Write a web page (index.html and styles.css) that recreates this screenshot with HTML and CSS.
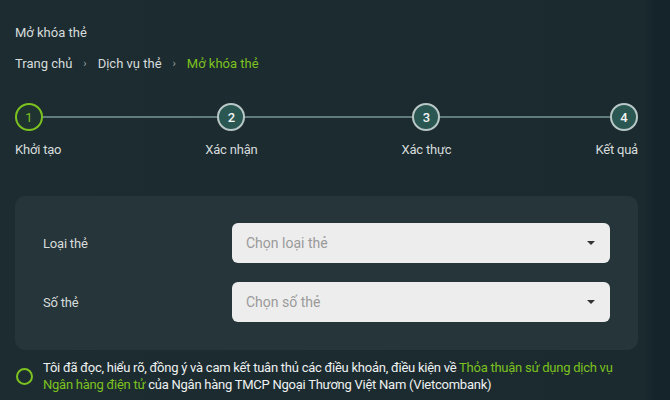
FILE: index.html
```html
<!DOCTYPE html>
<html lang="vi">
<head>
<meta charset="utf-8">
<link rel="stylesheet" href="styles.css">
</head>
<body>
<main class="page">
  <h1 class="title">Mở khóa thẻ</h1>
  <nav class="crumbs">
    <span>Trang chủ</span><span class="sep">›</span><span>Dịch vụ thẻ</span><span class="sep">›</span><span class="current">Mở khóa thẻ</span>
  </nav>
  <div class="stepper">
    <div class="line"></div>
    <div class="step step-start active"><span class="dot">1</span><span class="label">Khởi tạo</span></div>
    <div class="step"><span class="dot">2</span><span class="label">Xác nhận</span></div>
    <div class="step"><span class="dot">3</span><span class="label">Xác thực</span></div>
    <div class="step step-end"><span class="dot">4</span><span class="label">Kết quả</span></div>
  </div>
  <section class="card">
    <div class="row">
      <span class="field-label">Loại thẻ</span>
      <div class="select"><span>Chọn loại thẻ</span><i class="caret"></i></div>
    </div>
    <div class="row">
      <span class="field-label">Số thẻ</span>
      <div class="select"><span>Chọn số thẻ</span><i class="caret"></i></div>
    </div>
  </section>
  <div class="agree">
    <span class="check"></span>
    <p>Tôi đã đọc, hiểu rõ, đồng ý và cam kết tuân thủ các điều khoản, điều kiện về <span class="link">Thỏa thuận sử dụng dịch vụ Ngân hàng điện tử</span> của Ngân hàng TMCP Ngoại Thương Việt Nam (Vietcombank)</p>
  </div>
</main>
</body>
</html>
```

FILE: styles.css
```css
* { box-sizing: border-box; }
html, body { margin: 0; height: 100%; }
body {
  background: linear-gradient(90deg, #1d2c30 0%, #1b2a2e 96%, #15242a 97.8%, #15242a 100%);
  font-family: Roboto, "Noto Sans", sans-serif;
  color: #d9dfdf;
  overflow: hidden;
}
.page {
  width: 623px;
  margin-left: 15px;
  padding-top: 25px;
}
.title {
  margin: 0;
  font-size: 13px;
  font-weight: 400;
  line-height: 16px;
  color: #d6dcdc;
}
.crumbs {
  margin-top: 15px;
  font-size: 13px;
  line-height: 16px;
  display: flex;
  gap: 11px;
  color: #d6dcdc;
}
.crumbs .sep { color: #9aa6a6; font-size: 11px; }
.crumbs .current { color: #7cc220; }
.stepper {
  position: relative;
  margin-top: 31px;
  display: flex;
  justify-content: space-between;
}
.line {
  position: absolute;
  left: 14px;
  right: 14px;
  top: 13px;
  height: 2px;
  background: #5f7c7b;
}
.step {
  position: relative;
  display: flex;
  flex-direction: column;
  align-items: center;
  gap: 11px;
}
.step-start { align-items: flex-start; }
.step-end { align-items: flex-end; }
.dot {
  width: 28px;
  height: 28px;
  border-radius: 50%;
  border: 2px solid #b9c8c6;
  background: #2b5752;
  color: #f2f5f5;
  font-size: 13px;
  font-weight: 500;
  display: flex;
  align-items: center;
  justify-content: center;
}
.active .dot {
  border-color: #7cc220;
  background: #1f3330;
  color: #7cc220;
  font-weight: 400;
}
.label {
  font-size: 13px;
  line-height: 16px;
  color: #d6dcdc;
  letter-spacing: -0.2px;
}
.card {
  margin-top: 38px;
  background: #263539;
  border-radius: 10px;
  padding: 27px 28px 28px 28px;
  display: flex;
  flex-direction: column;
  gap: 19px;
}
.row {
  display: flex;
  align-items: center;
}
.field-label {
  width: 189px;
  font-size: 13px;
  color: #d6dcdc;
  letter-spacing: -0.2px;
}
.select {
  flex: 1;
  height: 40px;
  background: #ededed;
  border-radius: 6px;
  display: flex;
  align-items: center;
  justify-content: space-between;
  padding: 0 15px 0 14px;
  font-size: 14px;
  color: #9a9a9a;
}
.caret {
  width: 0;
  height: 0;
  border-left: 4px solid transparent;
  border-right: 4px solid transparent;
  border-top: 4px solid #333;
}
.agree {
  margin-top: 9px;
  display: flex;
  align-items: center;
  gap: 10px;
}
.check {
  flex: none;
  width: 17px;
  height: 17px;
  border-radius: 50%;
  border: 2px solid #7cc220;
  margin-left: 1px;
}
.agree p {
  margin: 0;
  font-size: 13px;
  line-height: 17px;
  color: #eef1f1;
  letter-spacing: -0.25px;
}
.link { color: #7cc220; }
```
